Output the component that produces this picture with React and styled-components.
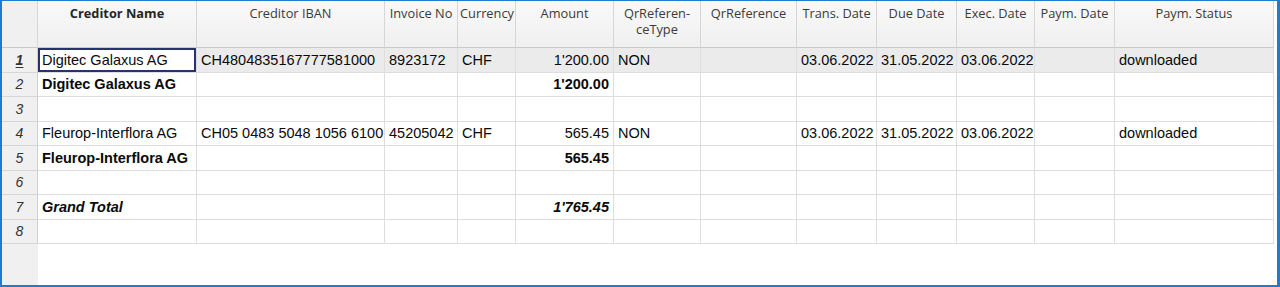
import React from "react";
import styled, { createGlobalStyle, css } from "styled-components";

const GlobalStyle = createGlobalStyle`
  html, body {
    margin: 0;
    padding: 0;
    background: #fff;
  }
`;

const COLUMNS = "36px 159px 188px 73px 58px 98px 87px 96px 80px 80px 78px 80px 159px";

const columns = [
  { key: "name", title: "Creditor Name", bold: true },
  { key: "iban", title: "Creditor IBAN" },
  { key: "invoice", title: "Invoice No" },
  { key: "currency", title: "Currency" },
  { key: "amount", title: "Amount", right: true },
  { key: "qrType", title: "QrReferen-\nceType" },
  { key: "qrRef", title: "QrReference" },
  { key: "trans", title: "Trans. Date" },
  { key: "due", title: "Due Date" },
  { key: "exec", title: "Exec. Date" },
  { key: "paym", title: "Paym. Date" },
  { key: "status", title: "Paym. Status" },
];

const rows = [
  {
    kind: "item",
    name: "Digitec Galaxus AG",
    iban: "CH4804835167777581000",
    invoice: "8923172",
    currency: "CHF",
    amount: "1'200.00",
    qrType: "NON",
    trans: "03.06.2022",
    due: "31.05.2022",
    exec: "03.06.2022",
    status: "downloaded",
  },
  { kind: "subtotal", name: "Digitec Galaxus AG", amount: "1'200.00" },
  { kind: "empty" },
  {
    kind: "item",
    name: "Fleurop-Interflora AG",
    iban: "CH05 0483 5048 1056 6100",
    invoice: "45205042",
    currency: "CHF",
    amount: "565.45",
    qrType: "NON",
    trans: "03.06.2022",
    due: "31.05.2022",
    exec: "03.06.2022",
    status: "downloaded",
  },
  { kind: "subtotal", name: "Fleurop-Interflora AG", amount: "565.45" },
  { kind: "empty" },
  { kind: "total", name: "Grand Total", amount: "1'765.45" },
  { kind: "empty" },
];

const Frame = styled.div`
  box-sizing: border-box;
  width: 1280px;
  height: 287px;
  border-style: solid;
  border-color: #1b7cd4;
  border-width: 1px 3px 2px 2px;
  background: linear-gradient(to right, #f0f0f0 0, #f0f0f0 36px, #fff 36px);
  overflow: hidden;
`;

const Sheet = styled.div`
  display: flex;
  flex-direction: column;
  width: max-content;
`;

const HeaderRow = styled.div`
  display: grid;
  grid-template-columns: ${COLUMNS};
  height: 47px;
`;

const HeaderCell = styled.div`
  box-sizing: border-box;
  padding: 4px 2px 0;
  border-right: 1px solid #d6d6d6;
  border-bottom: 1px solid #c9c9c9;
  background: linear-gradient(#f9f9f9, #f0f0f0);
  font-family: "Open Sans", "Noto Sans", sans-serif;
  font-size: 12.8px;
  line-height: 16px;
  font-weight: ${(p) => (p.$bold ? 700 : 400)};
  color: ${(p) => (p.$bold ? "#262626" : "#3a3a3a")};
  text-align: center;
  white-space: pre-line;
  overflow: hidden;
`;

const Corner = styled(HeaderCell)`
  background: #f0f0f0;
`;

const DataRow = styled.div`
  display: grid;
  grid-template-columns: ${COLUMNS};
  height: 24.5px;
  background: ${(p) => (p.$active ? "#ebebeb" : "#fff")};
`;

const RowNumber = styled.div`
  box-sizing: border-box;
  display: flex;
  align-items: center;
  justify-content: center;
  background: #f0f0f0;
  border-right: 1px solid #cfcfcf;
  border-bottom: 1px solid #d6d6d6;
  font-family: "Liberation Sans", Arial, sans-serif;
  font-size: 14px;
  font-style: italic;
  color: #333;
  ${(p) =>
    p.$active &&
    css`
      font-weight: 700;
      text-decoration: underline;
      text-underline-offset: 2px;
    `}
`;

const Cell = styled.div`
  box-sizing: border-box;
  display: flex;
  align-items: center;
  justify-content: ${(p) => (p.$right ? "flex-end" : "flex-start")};
  padding: 0 4px;
  border-right: 1px solid #dedede;
  border-bottom: 1px solid #dedede;
  font-family: "Liberation Sans", Arial, sans-serif;
  font-size: 14.5px;
  color: #0a0a0a;
  white-space: nowrap;
  overflow: hidden;
  font-weight: ${(p) => (p.$kind === "subtotal" || p.$kind === "total" ? 700 : 400)};
  font-style: ${(p) => (p.$kind === "total" ? "italic" : "normal")};
  ${(p) =>
    p.$selected &&
    css`
      background: #fff;
      box-shadow: inset 0 0 0 2px #26336d;
    `}
`;

export default function App() {
  return (
    <>
      <GlobalStyle />
      <Frame>
        <Sheet>
          <HeaderRow>
            <Corner />
            {columns.map((c) => (
              <HeaderCell key={c.key} $bold={c.bold}>
                {c.title}
              </HeaderCell>
            ))}
          </HeaderRow>
          {rows.map((row, i) => {
            const active = i === 0;
            return (
              <DataRow key={i} $active={active}>
                <RowNumber $active={active}>{i + 1}</RowNumber>
                {columns.map((c, j) => (
                  <Cell
                    key={c.key}
                    $kind={row.kind}
                    $right={c.right}
                    $selected={active && j === 0}
                  >
                    {row[c.key] || ""}
                  </Cell>
                ))}
              </DataRow>
            );
          })}
        </Sheet>
      </Frame>
    </>
  );
}
